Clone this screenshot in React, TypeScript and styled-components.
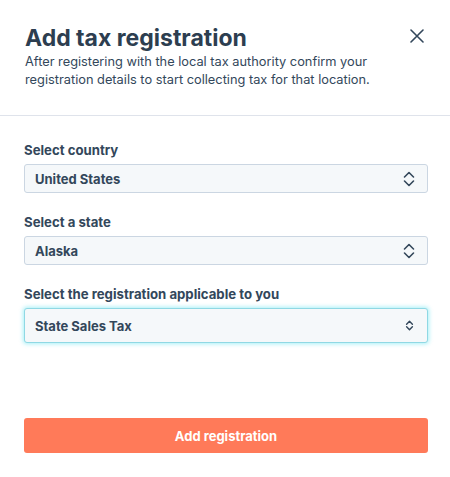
import React from "react";
import styled, { createGlobalStyle, css } from "styled-components";

const GlobalStyle = createGlobalStyle`
  html, body {
    margin: 0;
    padding: 0;
    background: #ffffff;
  }
  body {
    font-family: "Inter", "Noto Sans", sans-serif;
    color: #33475b;
  }
`;

const Dialog = styled.div`
  width: 450px;
  height: 477px;
  display: flex;
  flex-direction: column;
  background: #ffffff;
  box-sizing: border-box;
`;

const Header = styled.header`
  display: flex;
  justify-content: space-between;
  align-items: flex-start;
  padding: 23px 26px 26px 25px;
  border-bottom: 1px solid #dfe3eb;
`;

const Title = styled.h1`
  margin: 0;
  font-size: 23px;
  font-weight: 700;
  line-height: 30px;
  color: #2d3e50;
`;

const Subtitle = styled.p`
  margin: 0;
  font-size: 12.8px;
  line-height: 18px;
  color: #33475b;
`;

const CloseButton = styled.button`
  border: 0;
  background: none;
  padding: 0;
  margin-top: 6px;
  width: 14px;
  height: 14px;
  display: flex;
  cursor: pointer;
`;

const Body = styled.div`
  flex: 1;
  display: flex;
  flex-direction: column;
  padding: 25px 22px 24px 24px;
`;

const Field = styled.div`
  display: flex;
  flex-direction: column;
  margin-bottom: 20px;
`;

const Label = styled.label`
  font-size: 13.2px;
  font-weight: 700;
  line-height: 18px;
  color: #33475b;
  margin-bottom: 5px;
`;

const SelectBox = styled.div<{ $focused?: boolean }>`
  box-sizing: border-box;
  display: flex;
  align-items: center;
  justify-content: space-between;
  height: 29px;
  padding: 0 11px 0 10px;
  background: #f5f8fa;
  border: 1px solid #cbd6e2;
  border-radius: 3px;
  font-size: 13px;
  font-weight: 700;
  color: #33475b;
  ${(p) =>
    p.$focused &&
    css`
      height: 35px;
      padding-right: 13px;
      border-color: #8fd8e4;
      box-shadow: 0 0 4px 1px rgba(0, 208, 228, 0.35);
    `}
`;

const Footer = styled.div`
  margin-top: auto;
`;

const PrimaryButton = styled.button`
  width: 100%;
  height: 35px;
  border: 0;
  border-radius: 3px;
  background: #ff7a59;
  color: #ffffff;
  font-family: inherit;
  font-size: 13px;
  font-weight: 700;
  cursor: pointer;
`;

const Chevrons = ({ small }: { small?: boolean }) => (
  <svg
    width={small ? 9 : 14}
    height={small ? 13 : 18}
    viewBox="0 0 14 18"
    fill="none"
    stroke="#33475b"
    strokeWidth={small ? 2.2 : 1.6}
    strokeLinecap="round"
    strokeLinejoin="round"
  >
    <path d="M2.5 7 L7 2.5 L11.5 7" />
    <path d="M2.5 11 L7 15.5 L11.5 11" />
  </svg>
);

const Select = ({
  value,
  focused,
}: {
  value: string;
  focused?: boolean;
}) => (
  <SelectBox $focused={focused}>
    <span>{value}</span>
    <Chevrons small={focused} />
  </SelectBox>
);

const App = () => {
  return (
    <>
      <GlobalStyle />
      <Dialog>
        <Header>
          <div>
            <Title>Add tax registration</Title>
            <Subtitle>
              After registering with the local tax authority confirm your
              <br />
              registration details to start collecting tax for that location.
            </Subtitle>
          </div>
          <CloseButton aria-label="Close">
            <svg width="14" height="14" viewBox="0 0 14 14">
              <path
                d="M1 1 L13 13 M13 1 L1 13"
                stroke="#33475b"
                strokeWidth="1.6"
                strokeLinecap="round"
              />
            </svg>
          </CloseButton>
        </Header>
        <Body>
          <Field>
            <Label>Select country</Label>
            <Select value="United States" />
          </Field>
          <Field>
            <Label>Select a state</Label>
            <Select value="Alaska" />
          </Field>
          <Field>
            <Label>Select the registration applicable to you</Label>
            <Select value="State Sales Tax" focused />
          </Field>
          <Footer>
            <PrimaryButton>Add registration</PrimaryButton>
          </Footer>
        </Body>
      </Dialog>
    </>
  );
};

export default App;
